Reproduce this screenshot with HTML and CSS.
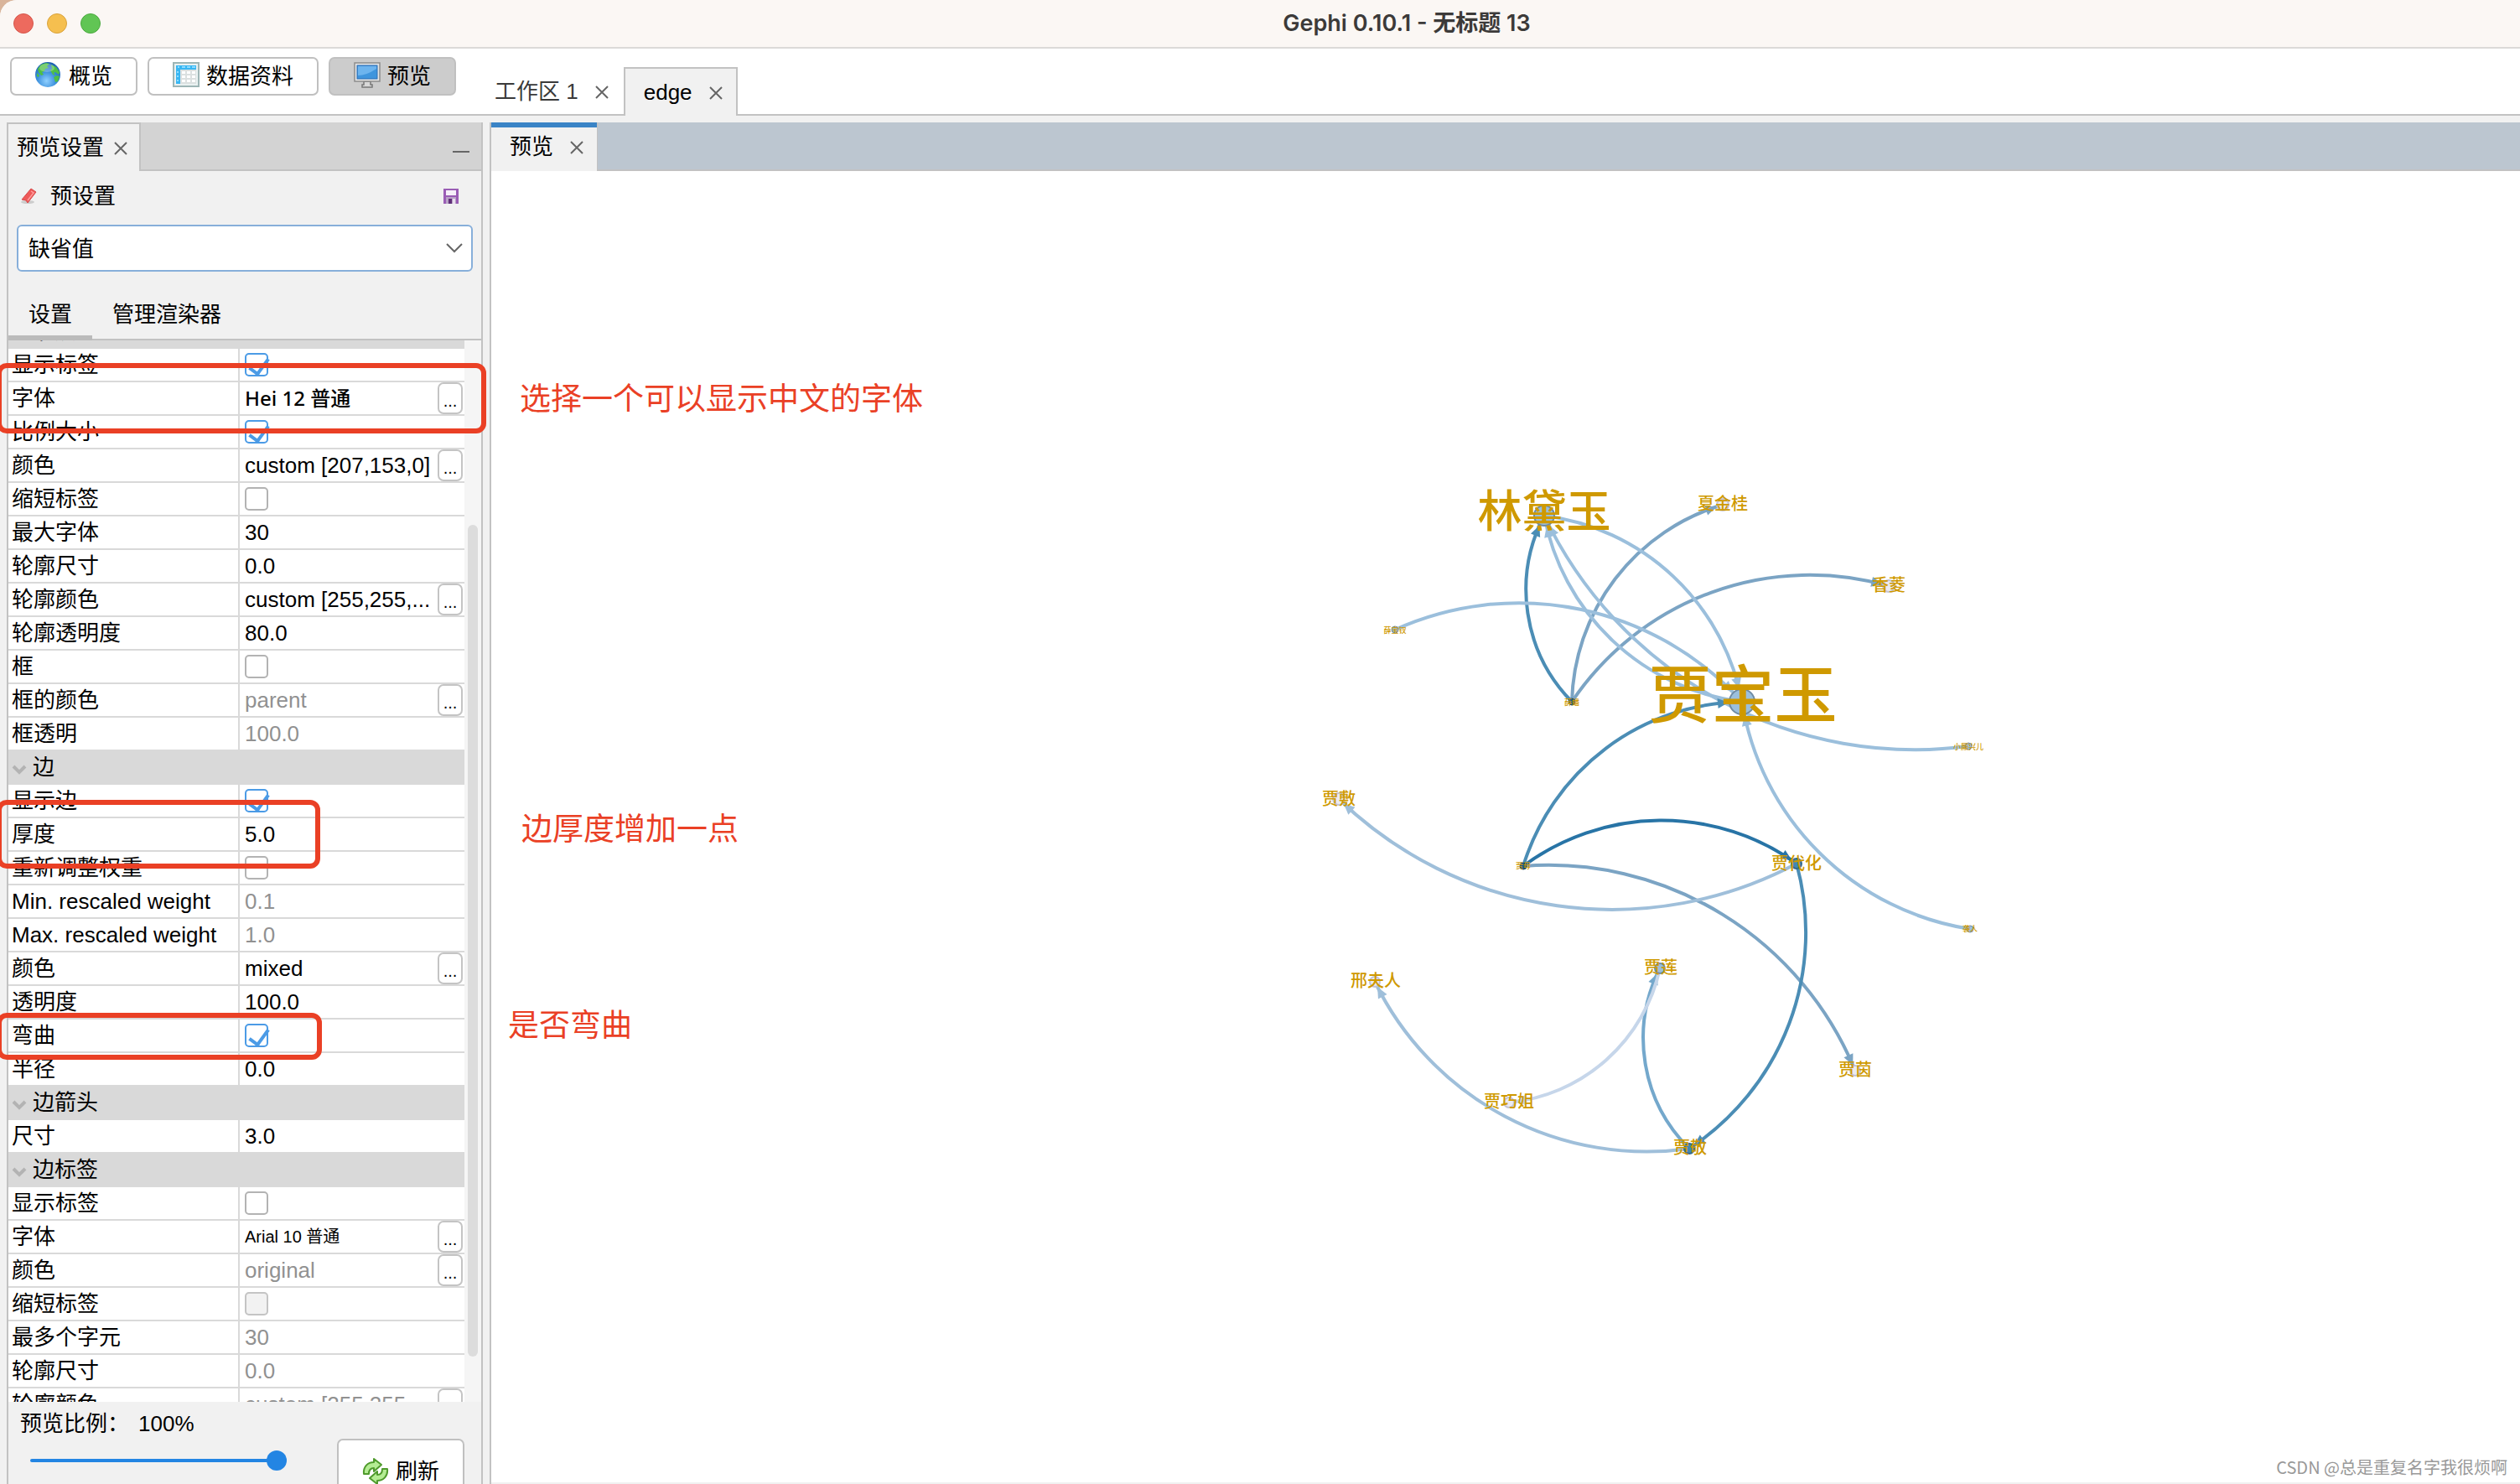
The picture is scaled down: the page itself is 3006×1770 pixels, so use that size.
FILE: index.html
```html
<!DOCTYPE html>
<html lang="zh-CN">
<head>
<meta charset="utf-8">
<title>Gephi 0.10.1 - 无标题 13</title>
<link rel="stylesheet" href="styles.css">
</head>
<body>
<div class="window">
  <header class="titlebar">
    <div class="lights"><span class="light light-close"></span><span class="light light-min"></span><span class="light light-max"></span></div>
    <h1 class="window-title">Gephi 0.10.1 - 无标题 13</h1>
  </header>

  <div class="toolbar">
    <nav class="perspectives">
      <button class="btn" type="button">
        <svg class="btn-icon" viewBox="0 0 32 32" aria-hidden="true">
          <defs><radialGradient id="sea" cx=".45" cy=".75" r=".75"><stop offset="0" stop-color="#8fd0ff"/><stop offset=".5" stop-color="#3b8fdc"/><stop offset="1" stop-color="#1b5fae"/></radialGradient></defs>
          <circle cx="15" cy="16" r="15" fill="url(#sea)"/>
          <path d="M3 9l4-5 6-2 4 1-3 3 2 2-4 1-1 3-3 1 2 3-3 1-3-4zM19 4l6 3 4 6-1 3-4-3-2 1 2 3-3-1-3-5 2-2zM22 19l4-2 3 1-2 6-3 1zM2 14l3 3-1 2-2-1z" fill="#4fbf45"/>
          <ellipse cx="14" cy="8" rx="9" ry="5" fill="#fff" opacity=".25"/>
        </svg>
        <span>概览</span>
      </button>
      <button class="btn" type="button">
        <svg class="btn-icon" viewBox="0 0 32 32" aria-hidden="true">
          <rect x="1" y="2" width="30" height="28" fill="#e9f1f1" stroke="#9db5b5" stroke-width="2"/>
          <rect x="4" y="5" width="24" height="22" fill="#dbe0e0"/>
          <path d="M4 5h24v5H9v17H4z" fill="#38b7f3"/>
          <path d="M11 12h4v3h-4zm6 0h4v3h-4zm6 0h4v3h-4zM11 17h4v3h-4zm6 0h4v3h-4zm6 0h4v3h-4zM11 22h4v3h-4zm6 0h4v3h-4zm6 0h4v3h-4z" fill="#fff"/>
          <path d="M6 7h2m3 0h4m2 0h4m2 0h4M6 12v2m0 3v2m0 3v2" stroke="#8edcff" stroke-width="2"/>
        </svg>
        <span>数据资料</span>
      </button>
      <button class="btn btn-selected" type="button">
        <svg class="btn-icon" viewBox="0 0 32 32" aria-hidden="true">
          <path d="M12 24h8v4h2v3H10v-3h2z" fill="#d8d8d8" stroke="#777" stroke-width="1.5"/>
          <rect x="1" y="2" width="30" height="22" fill="#e6e6e6" stroke="#8c8c8c" stroke-width="1.5"/>
          <rect x="4" y="5" width="24" height="16" fill="#3f95dd" stroke="#2a6cb4"/>
          <path d="M5 17q10 0 22-8V6H5z" fill="#6db4ee"/>
        </svg>
        <span>预览</span>
      </button>
    </nav>
    <div class="workspaces">
      <div class="ws-tab"><span>工作区 1</span><button class="close" type="button" aria-label="关闭"><svg viewBox="0 0 16 16"><path d="M1 1l14 14M15 1L1 15"/></svg></button></div>
      <div class="ws-tab ws-active"><span>edge</span><button class="close" type="button" aria-label="关闭"><svg viewBox="0 0 16 16"><path d="M1 1l14 14M15 1L1 15"/></svg></button></div>
    </div>
  </div>

  <main class="workspace">
    <section class="panel settings">
      <div class="panel-head">
        <div class="panel-tab"><span>预览设置</span><button class="close" type="button" aria-label="关闭"><svg viewBox="0 0 16 16"><path d="M1 1l14 14M15 1L1 15"/></svg></button></div>
        <button class="minimize" type="button" aria-label="最小化"></button>
      </div>
      <div class="preset-head">
        <svg class="preset-icon" viewBox="0 0 20 20" aria-hidden="true"><ellipse cx="9" cy="17" rx="8" ry="2" fill="#ccc"/><path d="M13 1l6 4-10 13-2-3-5-1z" fill="#ee5a5a" stroke="#d84a4a"/><path d="M13 4l3 2-7 9" stroke="#ff9c9c" stroke-width="1.5" fill="none"/></svg>
        <label for="preset">预设置</label>
        <button class="save" type="button" aria-label="保存"><svg viewBox="0 0 20 20"><path d="M1 1h18v18H1z" fill="#9a5db5"/><path d="M4 3h12v6H4z" fill="#f6f0f9"/><path d="M4 11h12v8H4z" fill="#b9a3c6"/><path d="M7 13h4v6H7z" fill="#5f2f78"/><path d="M12 13h3v6h-3z" fill="#e9e0ee"/></svg></button>
      </div>
      <div class="combo">
        <select id="preset"><option>缺省值</option></select>
        <svg class="combo-arrow" viewBox="0 0 20 12" aria-hidden="true"><path d="M1 1l9 9 9-9"/></svg>
      </div>
      <div class="subtabs"><button class="subtab subtab-active" type="button">设置</button><button class="subtab" type="button">管理渲染器</button></div>

      <div class="sheet">
        <div class="sheet-view">
        <table class="props">
          <colgroup><col class="col-name"><col></colgroup>
          <tbody>
          <tr class="group"><th colspan="2"><svg class="fold" viewBox="0 0 18 12"><path d="M2 2l7 7 7-7"/></svg>节点标签</th></tr>
          <tr><th><label for="c1">显示标签</label></th><td><input id="c1" type="checkbox" checked></td></tr>
          <tr><th>字体</th><td class="font-hei"><div class="cell"><span>Hei 12 普通</span><button class="more" type="button">...</button></div></td></tr>
          <tr><th><label for="c2">比例大小</label></th><td><input id="c2" type="checkbox" checked></td></tr>
          <tr><th>颜色</th><td><div class="cell"><span>custom [207,153,0]</span><button class="more" type="button">...</button></div></td></tr>
          <tr><th><label for="c3">缩短标签</label></th><td><input id="c3" type="checkbox"></td></tr>
          <tr><th>最大字体</th><td>30</td></tr>
          <tr><th>轮廓尺寸</th><td>0.0</td></tr>
          <tr><th>轮廓颜色</th><td><div class="cell"><span>custom [255,255,...</span><button class="more" type="button">...</button></div></td></tr>
          <tr><th>轮廓透明度</th><td>80.0</td></tr>
          <tr><th><label for="c4">框</label></th><td><input id="c4" type="checkbox"></td></tr>
          <tr><th>框的颜色</th><td class="off"><div class="cell"><span>parent</span><button class="more" type="button">...</button></div></td></tr>
          <tr><th>框透明</th><td class="off">100.0</td></tr>
          <tr class="group"><th colspan="2"><svg class="fold" viewBox="0 0 18 12"><path d="M2 2l7 7 7-7"/></svg>边</th></tr>
          <tr><th><label for="c5">显示边</label></th><td><input id="c5" type="checkbox" checked></td></tr>
          <tr><th>厚度</th><td>5.0</td></tr>
          <tr><th><label for="c6">重新调整权重</label></th><td><input id="c6" type="checkbox"></td></tr>
          <tr><th>Min. rescaled weight</th><td class="off">0.1</td></tr>
          <tr><th>Max. rescaled weight</th><td class="off">1.0</td></tr>
          <tr><th>颜色</th><td><div class="cell"><span>mixed</span><button class="more" type="button">...</button></div></td></tr>
          <tr><th>透明度</th><td>100.0</td></tr>
          <tr><th><label for="c7">弯曲</label></th><td><input id="c7" type="checkbox" checked></td></tr>
          <tr><th>半径</th><td>0.0</td></tr>
          <tr class="group"><th colspan="2"><svg class="fold" viewBox="0 0 18 12"><path d="M2 2l7 7 7-7"/></svg>边箭头</th></tr>
          <tr><th>尺寸</th><td>3.0</td></tr>
          <tr class="group"><th colspan="2"><svg class="fold" viewBox="0 0 18 12"><path d="M2 2l7 7 7-7"/></svg>边标签</th></tr>
          <tr><th><label for="c8">显示标签</label></th><td><input id="c8" type="checkbox"></td></tr>
          <tr><th>字体</th><td class="font-arial"><div class="cell"><span>Arial 10 普通</span><button class="more" type="button">...</button></div></td></tr>
          <tr><th>颜色</th><td class="off"><div class="cell"><span>original</span><button class="more" type="button">...</button></div></td></tr>
          <tr><th><label for="c9">缩短标签</label></th><td><input id="c9" type="checkbox" disabled></td></tr>
          <tr><th>最多个字元</th><td class="off">30</td></tr>
          <tr><th>轮廓尺寸</th><td class="off">0.0</td></tr>
          <tr><th>轮廓颜色</th><td class="off"><div class="cell"><span>custom [255,255,...</span><button class="more" type="button">...</button></div></td></tr>
          </tbody>
        </table>
        </div>
        <div class="scrollbar"><div class="thumb"></div></div>
      </div>

      <footer class="panel-foot">
        <div class="ratio">
          <div class="ratio-text"><label for="ratio">预览比例：</label><output for="ratio">100%</output></div>
          <input id="ratio" class="slider" type="range" min="0" max="100" value="100">
        </div>
        <button class="btn refresh" type="button">
          <svg class="btn-icon" viewBox="0 0 32 32" aria-hidden="true"><g fill="#b4ec93" stroke="#4f9a2c" stroke-width="2" stroke-linejoin="round"><path d="M2 19C1 10 7 5 14 5V1l9 7-9 8v-4c-4 0-6 2-6 7z"/><path d="M30 13c1 9-5 14-12 14v4l-9-7 9-8v4c4 0 6-2 6-7z"/></g></svg>
          <span>刷新</span>
        </button>
      </footer>
      <div class="mark mark-font"></div>
      <div class="mark mark-width"></div>
      <div class="mark mark-curve"></div>
    </section>

    <section class="panel preview">
      <div class="preview-head">
        <div class="preview-tab"><span>预览</span><button class="close" type="button" aria-label="关闭"><svg viewBox="0 0 16 16"><path d="M1 1l14 14M15 1L1 15"/></svg></button></div>
      </div>
      <div class="canvas">
        <svg class="graph" viewBox="586 204 2420 1564" role="img" aria-label="人物关系图">
          <g id="edges"></g>
          <g class="nodes">
            <circle id="daiyu" class="mid" cx="1842" cy="615" r="12"/>
            <circle id="baoyu" class="mid" cx="2078" cy="837" r="15"/>
            <circle id="jingui" class="pale" cx="2055" cy="602" r="7"/>
            <circle id="xiangling" class="pale" cx="2253" cy="699" r="7"/>
            <circle id="baochai" class="mid small" cx="1664" cy="751" r="4"/>
            <circle id="xuepan" class="dark small" cx="1875" cy="837" r="4"/>
            <circle id="xinger" class="mid small" cx="2348" cy="890" r="4"/>
            <circle id="jiafu" class="pale" cx="1597" cy="953" r="7"/>
            <circle id="jiamu" class="dark small" cx="1817" cy="1033" r="4"/>
            <circle id="daihua" class="deep" cx="2143" cy="1030" r="6"/>
            <circle id="xiren" class="mid small" cx="2350" cy="1108" r="4"/>
            <circle id="xing" class="pale" cx="1640" cy="1171" r="6"/>
            <circle id="jialian" class="mid" cx="1980" cy="1155" r="6"/>
            <circle id="jiayin" class="pale" cx="2213" cy="1277" r="6"/>
            <circle id="qiaojie" class="pale" cx="1800" cy="1315" r="6"/>
            <circle id="jiajing" class="deep" cx="2015" cy="1370" r="6"/>
          </g>
          <g class="names">
            <text class="n2" x="1842" y="629">林黛玉</text>
            <text class="n1" x="2079" y="856">贾宝玉</text>
            <text class="n3" x="2055" y="608">夏金桂</text>
            <text class="n3" x="2253" y="705">香菱</text>
            <text class="n4" x="1664" y="755">薛宝钗</text>
            <text class="n4" x="1875" y="841">薛蟠</text>
            <text class="n4" x="2348" y="894">小厮兴儿</text>
            <text class="n3" x="1597" y="960">贾敷</text>
            <text class="n4" x="1817" y="1036">贾母</text>
            <text class="n3" x="2143" y="1037">贾代化</text>
            <text class="n4" x="2350" y="1111">袭人</text>
            <text class="n3" x="1641" y="1177">邢夫人</text>
            <text class="n3" x="1981" y="1161">贾莲</text>
            <text class="n3" x="2213" y="1283">贾茵</text>
            <text class="n3" x="1800" y="1321">贾巧姐</text>
            <text class="n3" x="2016" y="1376">贾敬</text>
          </g>
        </svg>
        <p class="note note-font">选择一个可以显示中文的字体</p>
        <p class="note note-width">边厚度增加一点</p>
        <p class="note note-curve">是否弯曲</p>
        <p class="watermark">CSDN @总是重复名字我很烦啊</p>
      </div>
    </section>
  </main>
</div>
<script src="graph.js"></script>
</body>
</html>
```
FILE: styles.css
```css
* { box-sizing: border-box; }
body {
  margin: 0;
  background: #d9b49a;
  color: #000;
  font: 26px/36px "Liberation Sans", "Noto Sans CJK SC", sans-serif;
}
button, select, input { font: inherit; color: inherit; margin: 0; }
button { padding: 0; border: 0; background: none; }
.window {
  display: flex;
  flex-direction: column;
  height: 100vh;
  overflow: hidden;
  background: #f1f1f1;
  border-top-left-radius: 20px;
}

/* title bar */
.titlebar {
  flex: none;
  display: flex;
  align-items: center;
  height: 58px;
  padding-left: 16px;
  background: #fbf7f4;
  border-bottom: 2px solid #dcdad8;
}
.lights { display: flex; gap: 16px; }
.light { width: 24px; height: 24px; border-radius: 50%; border: 1px solid; }
.light-close { background: #ed6a5e; border-color: #d5564b; }
.light-min { background: #f5bf4f; border-color: #d8a23c; }
.light-max { background: #61c554; border-color: #4ca93f; }
.window-title {
  flex: 1;
  margin: 0;
  padding-left: 230px;
  text-align: center;
  color: #3c3a39;
  font: 600 27px/36px Inter, "Noto Sans CJK SC", sans-serif;
}

/* toolbar */
.toolbar {
  flex: none;
  display: flex;
  justify-content: flex-start;
  height: 80px;
  background: #fff;
  border-bottom: 2px solid #c2c2c2;
}
.perspectives { display: flex; align-items: flex-start; gap: 12px; padding: 10px 22px 0 12px; }
.btn {
  display: flex;
  align-items: center;
  gap: 8px;
  height: 46px;
  padding: 0 28px;
  background: #fff;
  border: 2px solid #c0c0c0;
  border-radius: 7px;
}
.btn-selected { background: #ccc; }
.btn-icon { flex: none; width: 32px; height: 32px; margin-top: -4px; }
.workspaces { display: flex; align-items: flex-end; margin-bottom: -2px; }
.ws-tab {
  display: flex;
  align-items: center;
  gap: 20px;
  height: 58px;
  padding: 0 18px 0 24px;
  color: #3a3a3a;
}
.ws-active {
  padding: 0 16px 0 22px;
  background: #f1f1f1;
  border: 2px solid #c2c2c2;
  border-bottom: 0;
  color: #000;
}
.close { width: 16px; height: 16px; margin-top: 2px; }
.close svg { display: block; stroke: #666; stroke-width: 2; }

/* panels */
.workspace { flex: 1; min-height: 0; display: flex; gap: 8px; padding: 8px 0 0 8px; }
.panel { display: flex; flex-direction: column; min-height: 0; }
.settings { position: relative; flex: none; width: 568px; border: solid #c2c2c2; border-width: 0 2px; }
.panel-head, .preview-head { flex: none; display: flex; align-items: stretch; height: 58px; }
.panel-head { justify-content: space-between; background: #d3d3d3; box-shadow: inset 0 -2px #c2c2c2; }
.panel-tab {
  display: flex;
  align-items: center;
  gap: 12px;
  padding: 0 14px 0 10px;
  background: #f1f1f1;
  border: solid #c2c2c2;
  border-width: 2px 2px 0 0;
}
.minimize { align-self: flex-end; width: 20px; height: 2px; margin: 0 14px 22px 0; background: #666; }
.preset-head { display: flex; align-items: center; gap: 16px; padding: 12px 26px 0 14px; }
.preset-icon { width: 20px; height: 20px; }
.save { width: 20px; height: 20px; margin-left: auto; }
.save svg { display: block; }
.combo { display: grid; align-items: center; margin: 16px 10px 0; height: 56px; }
.combo > * { grid-area: 1 / 1; }
.combo select {
  appearance: none;
  width: 100%;
  height: 56px;
  padding: 2px 12px 0;
  background: #fff;
  border: 2px solid #87afda;
  border-radius: 6px;
  outline: 0;
}
.combo-arrow { justify-self: end; width: 20px; height: 12px; margin-right: 12px; fill: none; stroke: #666; stroke-width: 2; pointer-events: none; }
.subtabs { display: flex; margin-top: 20px; height: 62px; border-bottom: 2px solid #c2c2c2; }
.subtab { height: 62px; padding: 0 24px; }
.subtab-active { border-bottom: 6px solid #bbb; padding-top: 6px; }

/* property sheet, scrolled part-way down */
.sheet { flex: 1; min-height: 0; display: flex; }
.sheet-view { flex: 1; min-height: 0; overflow: hidden; }
.scrollbar { flex: none; width: 20px; padding: 220px 4px 54px; background: #f5f5f5; }
.thumb { height: 100%; border-radius: 6px; background: #dcdcdc; }
.props { width: 100%; margin-top: -30px; table-layout: fixed; border-collapse: separate; border-spacing: 0; background: #fff; }
.col-name { width: 276px; }
.props tr { height: 40px; }
.props th, .props td {
  height: 40px;
  padding: 0 0 0 4px;
  border-bottom: 2px solid #d9d9d9;
  font-weight: 400;
  text-align: left;
  white-space: nowrap;
  vertical-align: middle;
  overflow: hidden;
}
.props th { border-right: 2px solid #d9d9d9; }
.props td { padding-left: 6px; }
.props label, .props th, .props td { line-height: 38px; }
.props .group th { background: #d9d9d9; }
.fold { width: 18px; height: 12px; margin-right: 7px; fill: none; stroke: #b3b3b3; stroke-width: 4; }
.props .off { color: #919191; }
.cell { display: flex; align-items: center; justify-content: space-between; height: 38px; }
.font-hei span { font-family: "Noto Sans", "Noto Sans CJK SC", sans-serif; font-size: 24px; font-weight: 500; }
.font-arial span { font-size: 20px; }
.more {
  flex: none;
  width: 30px;
  height: 38px;
  margin-right: 2px;
  background: #fff;
  border: 2px solid #c4c4c4;
  border-radius: 7px;
  color: #000;
  font-size: 20px;
  line-height: 40px;
}
.props input {
  appearance: none;
  display: block;
  width: 28px;
  height: 28px;
  border: 2px solid #b3b3b3;
  border-radius: 5px;
  background: #fff;
}
.props input:checked { border-color: #4b9be6; }
.props input:checked::before {
  content: "";
  display: block;
  width: 10px;
  height: 20px;
  margin: 0 0 0 8px;
  border: solid #4b9be6;
  border-width: 0 4px 4px 0;
  transform: rotate(36deg);
}
.props input:disabled { background: #f2f2f2; border-color: #c4c4c4; }

.panel-foot { flex: none; display: flex; justify-content: space-between; height: 98px; padding: 8px 20px 0 14px; }
.ratio-text { display: flex; gap: 11px; }
.slider { appearance: none; display: block; width: 306px; height: 24px; margin: 14px 0 0 12px; background: none; }
.slider::-webkit-slider-runnable-track { height: 4px; border-radius: 2px; background: #2385e3; }
.slider::-webkit-slider-thumb { appearance: none; width: 24px; height: 24px; margin-top: -10px; border-radius: 50%; background: #2385e3; }
.refresh { flex: none; height: 78px; margin-top: 36px; }
.refresh .btn-icon { margin: 0; }

/* preview */
.preview { flex: 1; min-width: 0; border-left: 2px solid #c2c2c2; }
.preview-head { background: #bcc6d0; box-shadow: inset 0 -2px #c2c2c2; margin-left: -2px; }
.preview-tab {
  display: flex;
  align-items: center;
  gap: 20px;
  padding: 0 16px 0 22px;
  background: #f1f1f1;
  border: solid #c2c2c2;
  border-width: 0 1px 0 2px;
  box-shadow: inset 0 6px #3a84c6;
}
.canvas { position: relative; flex: 1; min-height: 0; margin-bottom: 2px; background: #fff; }
.graph { display: block; width: 100%; height: 100%; }
.nodes circle { stroke-width: 2; }
.nodes .small { stroke-width: 1; }
.mid { fill: #9bbfdc; stroke: #6f8ba3; }
.pale { fill: #ecebf2; stroke: #c5c4d4; }
.deep { fill: #4287b3; stroke: #33698c; }
.dark { fill: #1f5d82; stroke: #174661; }
.names { fill: #cf9900; text-anchor: middle; font-family: "Noto Sans CJK SC", sans-serif; font-weight: 500; }
.n1 { font-size: 75px; }
.n2 { font-size: 53px; }
.n3 { font-size: 20px; }
.n4 { font-size: 9px; }
.edge { fill: none; stroke-width: 4; }

/* red notes */
.note { position: absolute; margin: 0; color: #ea4025; font-size: 37px; line-height: 44px; white-space: nowrap; }
.note-font { left: 34px; top: 251px; }
.note-width { left: 36px; top: 764px; }
.note-curve { left: 20px; top: 998px; }
.mark { position: absolute; left: -14px; border: 6px solid #ea4025; border-radius: 12px; pointer-events: none; }
.mark-font { top: 287px; width: 584px; height: 84px; }
.mark-width { top: 808px; width: 386px; height: 82px; }
.mark-curve { top: 1062px; width: 388px; height: 56px; }
.watermark { position: absolute; right: 15px; bottom: 4px; margin: 0; color: #999; font: 20px/28px "Noto Sans CJK SC", sans-serif; }
```
FILE: graph.js
```js
// Directed relations: source node, target node, colour.
const relations = [
  ["xuepan", "jingui", "#7ba4c4"],
  ["xuepan", "xiangling", "#7ba4c4"],
  ["xuepan", "daiyu", "#4b8db5"],
  ["baochai", "baoyu", "#9bbfdc"],
  ["daiyu", "baoyu", "#9bbfdc"],
  ["baoyu", "daiyu", "#9bbfdc"],
  ["xinger", "daiyu", "#9bbfdc"],
  ["xiren", "baoyu", "#9bbfdc"],
  ["jiamu", "baoyu", "#4b8db5"],
  ["jiamu", "jiayin", "#7ba4c4"],
  ["jiamu", "daihua", "#2874a6"],
  ["daihua", "jiafu", "#9fbfda"],
  ["daihua", "jiajing", "#4b8db5"],
  ["jiajing", "jialian", "#74a8cc"],
  ["jiajing", "xing", "#9fbfda"],
  ["jialian", "qiaojie", "#c6d6ea"]
];
const RADIUS = 0.85; // arc radius as a share of the chord
const ARROW = 13;
const layer = document.getElementById("edges");

function node(id) {
  const c = document.getElementById(id);
  return { x: +c.getAttribute("cx"), y: +c.getAttribute("cy"), r: +c.getAttribute("r") };
}
function add(attrs) {
  const p = document.createElementNS("http://www.w3.org/2000/svg", "path");
  for (const k in attrs) p.setAttribute(k, attrs[k]);
  layer.appendChild(p);
  return p;
}
for (const [from, to, colour] of relations) {
  const a = node(from), b = node(to);
  const r = Math.hypot(b.x - a.x, b.y - a.y) * RADIUS;
  const line = add({
    class: "edge",
    stroke: colour,
    d: `M${a.x} ${a.y}A${r} ${r} 0 0 1 ${b.x} ${b.y}`
  });
  const len = line.getTotalLength();
  const tip = line.getPointAtLength(len - b.r - 1);
  const base = line.getPointAtLength(len - b.r - 1 - ARROW);
  const ux = (tip.x - base.x) / ARROW, uy = (tip.y - base.y) / ARROW;
  add({
    fill: colour,
    d: `M${tip.x} ${tip.y}L${base.x - uy * 6} ${base.y + ux * 6}L${base.x + uy * 6} ${base.y - ux * 6}Z`
  });
}
```
